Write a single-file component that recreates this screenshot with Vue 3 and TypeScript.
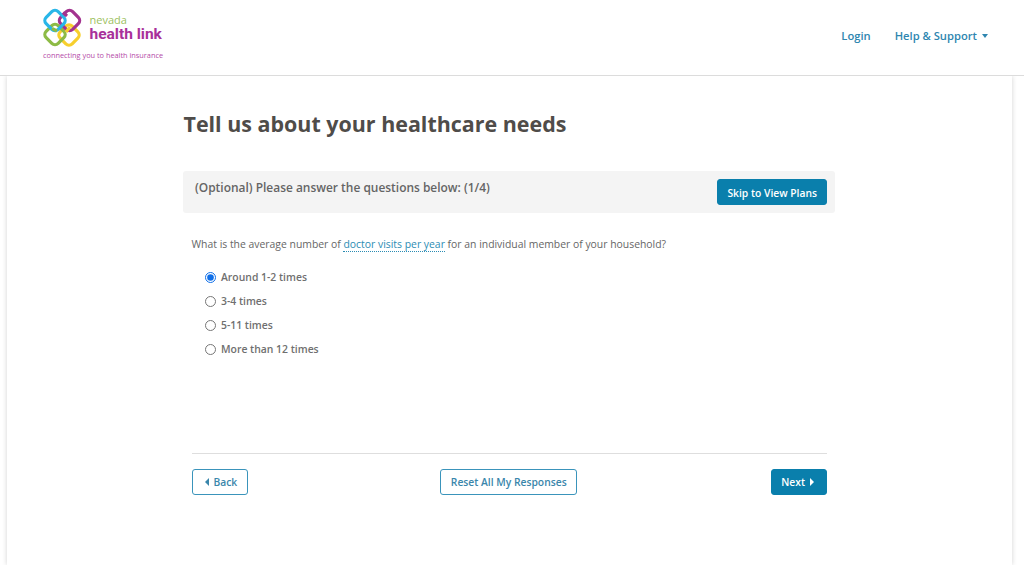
<script setup lang="ts">
import { ref } from 'vue'
const options: string[] = ['Around 1-2 times', '3-4 times', '5-11 times', 'More than 12 times']
const selected = ref<string>(options[0])
</script>

<template>
  <div class="page">
    <header class="header">
      <div class="brand">
        <div class="brand-top">
          <svg class="mark" width="39" height="40" viewBox="0 0 39 40" fill="none" stroke-width="3.200" aria-hidden="true">
            <rect x="17.500" y="18.500" width="17" height="17" rx="4.500" stroke="#f7cf2d" transform="rotate(45 26 27)" />
            <rect x="3.500" y="18" width="17" height="17" rx="4.500" stroke="#8dbb45" transform="rotate(45 12 26.500)" />
            <rect x="18" y="4" width="17" height="17" rx="4.500" stroke="#a3338f" transform="rotate(45 26.500 12.500)" />
            <rect x="3.500" y="4" width="17" height="17" rx="4.500" stroke="#29b6e8" transform="rotate(45 12 12.500)" />
            <path d="M20 4.500 L24 8" stroke="#a3338f" />
            <path d="M27 19 L23 24" stroke="#f7cf2d" />
            <path d="M9 20.500 L14 23" stroke="#8dbb45" />
          </svg>
          <div class="brand-words">
            <span class="word-state">nevada</span>
            <span class="word-name">health link</span>
          </div>
        </div>
        <div class="tagline">connecting you to health insurance</div>
      </div>
      <nav class="nav">
        <a class="nav-link">Login</a>
        <a class="nav-link">Help &amp; Support<span class="caret"></span></a>
      </nav>
    </header>

    <main class="sheet">
      <section class="content">
        <h1 class="title">Tell us about your healthcare needs</h1>
        <div class="banner">
          <span class="banner-text">(Optional) Please answer the questions below: (1/4)</span>
          <button class="btn solid skip">Skip to View Plans</button>
        </div>
        <div class="body">
          <p class="question">
            What is the average number of <a class="term">doctor visits per year</a> for an individual member of your household?
          </p>
          <div class="options">
            <label v-for="opt in options" :key="opt" class="option">
              <input v-model="selected" class="radio" type="radio" name="visits" :value="opt" />
              <span>{{ opt }}</span>
            </label>
          </div>
          <div class="actions">
            <button class="btn outline back"><span class="tri left"></span>Back</button>
            <button class="btn outline reset">Reset All My Responses</button>
            <button class="btn solid next">Next<span class="tri right"></span></button>
          </div>
        </div>
      </section>
    </main>
  </div>
</template>

<style>
html, body { margin: 0; background: #fff; overflow: hidden; }
</style>

<style scoped>
.page {
  height: 565px;
  overflow: hidden;
  font-family: "Open Sans", sans-serif;
  color: #5f5f5f;
  background: #fff;
}
.header {
  height: 75px;
  box-sizing: content-box;
  border-bottom: 1px solid #dcdcdc;
  display: flex;
  justify-content: space-between;
  padding: 0 36px 0 43px;
  position: relative;
  z-index: 1;
  background: #fff;
}
.brand { display: flex; flex-direction: column; padding-top: 8px; }
.brand-top { display: flex; align-items: flex-start; gap: 7.500px; height: 41.500px; }
.mark { flex: none; }
.brand-words { display: flex; flex-direction: column; padding-top: 6px; }
.word-state { font-size: 11px; line-height: 11px; color: #9cbf5e; }
.word-name { font-family: Roboto, sans-serif; font-size: 15.500px; line-height: 18px; font-weight: 700; color: #a8309a; white-space: nowrap; }
.tagline { font-size: 7.350px; line-height: 10px; color: #b54aa8; white-space: nowrap; }
.nav { display: flex; align-items: center; gap: 24px; padding-bottom: 5px; }
.nav-link { font-size: 11.200px; font-weight: 600; color: #2e86b0; display: flex; align-items: center; }
.caret {
  margin: 1px 0 0 5px;
  border-left: 3.500px solid transparent;
  border-right: 3.500px solid transparent;
  border-top: 4px solid #2e86b0;
}
.sheet {
  margin: 0 12px 0 7px;
  height: 489px;
  background: #fff;
  box-shadow: 0 0 5px rgba(0, 0, 0, 0.18);
  padding-left: 176px;
}
.content { width: 652px; }
.title {
  margin: 0 0 0 0.500px;
  padding-top: 33px;
  font-size: 21.450px;
  line-height: 30px;
  font-weight: 700;
  color: #4f4c49;
}
.banner {
  margin-top: 32px;
  height: 42px;
  background: #f4f4f4;
  border-radius: 3px;
  display: flex;
  justify-content: space-between;
  align-items: flex-start;
  padding: 8px 8px 0 12px;
  box-sizing: border-box;
}
.banner-text { font-size: 11.950px; line-height: 18px; font-weight: 600; color: #656565; }
.btn {
  font-family: "Open Sans", sans-serif;
  font-size: 10.300px;
  font-weight: 600;
  height: 26px;
  padding: 0 10px;
  border-radius: 3px;
  box-sizing: border-box;
  display: inline-flex;
  align-items: center;
  cursor: pointer;
}
.solid { background: #0a7fac; border: 1px solid #0a7fac; color: #fff; }
.outline { background: #fff; border: 1px solid #3a94bb; color: #3a86ab; }
.skip { padding: 1px 9px 0; }
.back { padding: 0 10px 0 12px; }
.next { padding: 0 12px 0 9px; }
.reset { padding: 0 9.500px; margin-right: 2px; }
.body { padding: 0 8px 0 8.500px; }
.question { margin: 24px 0 0; font-size: 10.400px; line-height: 15px; color: #666; }
.term { color: #2b8cb3; border-bottom: 1px dotted #2b8cb3; }
.options { margin-top: 13px; padding-left: 13px; display: flex; flex-direction: column; }
.option { height: 24px; display: flex; align-items: center; gap: 5.500px; font-size: 10.400px; font-weight: 600; color: #6f6f6f; }
.radio { margin: 0; width: 11px; height: 11px; accent-color: #0f6fe8; flex: none; }
.actions {
  margin-top: 92px;
  border-top: 1px solid #dedede;
  padding-top: 15px;
  display: flex;
  justify-content: space-between;
}
.tri { display: inline-block; border-top: 4px solid transparent; border-bottom: 4px solid transparent; }
.tri.left { border-right: 4px solid #3a86ab; margin-right: 5px; }
.tri.right { border-left: 4px solid #fff; margin-left: 5px; }
</style>
